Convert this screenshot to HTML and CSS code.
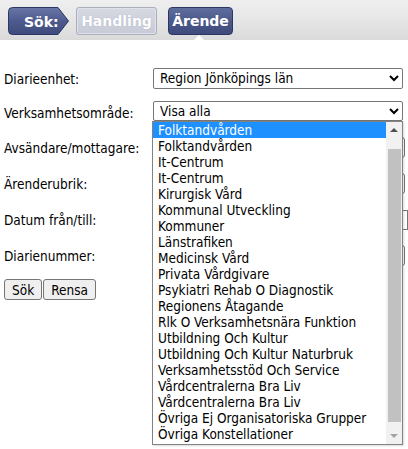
FILE: index.html
```html
<!DOCTYPE html>
<html lang="sv">
<head>
<meta charset="utf-8">
<link rel="stylesheet" href="styles.css">
</head>
<body>
<div class="topbar">
  <div class="tab tab-sok">
    <svg class="tab-shape" width="62" height="28" viewBox="0 0 62 28">
      <defs>
        <linearGradient id="g1" x1="0" y1="0" x2="0" y2="1">
          <stop offset="0" stop-color="#6a76a6"/>
          <stop offset="0.5" stop-color="#4d5a8e"/>
          <stop offset="1" stop-color="#3f4b7c"/>
        </linearGradient>
      </defs>
      <path d="M4.5 0.5 H50 L60.5 14 L50 27.5 H4.5 Q0.5 27.5 0.5 23.5 V4.5 Q0.5 0.5 4.5 0.5 Z" fill="url(#g1)" stroke="#2c3766" stroke-width="1"/>
    </svg>
    <span class="tab-label">Sök:</span>
  </div>
  <div class="tab tab-handling">Handling</div>
  <div class="tab tab-arende">Ärende</div>
  <span class="notch"></span>
</div>

<form class="form">
  <div class="row r1">
    <label class="lbl">Diarieenhet:</label>
    <select class="sel"><option>Region Jönköpings län</option></select>
  </div>
  <div class="row r2">
    <label class="lbl">Verksamhetsområde:</label>
    <select class="sel"><option>Visa alla</option></select>
  </div>
  <div class="row r3">
    <label class="lbl">Avsändare/mottagare:</label>
    <input class="txt" type="text">
  </div>
  <div class="row r4">
    <label class="lbl">Ärenderubrik:</label>
    <input class="txt" type="text">
  </div>
  <div class="row r5">
    <label class="lbl">Datum från/till:</label>
    <input class="txt wide" type="text">
  </div>
  <div class="row r6">
    <label class="lbl">Diarienummer:</label>
    <input class="txt" type="text">
  </div>
  <div class="buttons">
    <button type="button" class="btn">Sök</button><button type="button" class="btn">Rensa</button>
  </div>

  <div class="listbox">
    <ul class="options">
      <li class="opt active">Folktandvården</li>
      <li class="opt">Folktandvården</li>
      <li class="opt">It-Centrum</li>
      <li class="opt">It-Centrum</li>
      <li class="opt">Kirurgisk Vård</li>
      <li class="opt">Kommunal Utveckling</li>
      <li class="opt">Kommuner</li>
      <li class="opt">Länstrafiken</li>
      <li class="opt">Medicinsk Vård</li>
      <li class="opt">Privata Vårdgivare</li>
      <li class="opt">Psykiatri Rehab O Diagnostik</li>
      <li class="opt">Regionens Åtagande</li>
      <li class="opt">Rlk O Verksamhetsnära Funktion</li>
      <li class="opt">Utbildning Och Kultur</li>
      <li class="opt">Utbildning Och Kultur Naturbruk</li>
      <li class="opt">Verksamhetsstöd Och Service</li>
      <li class="opt">Vårdcentralerna Bra Liv</li>
      <li class="opt">Vårdcentralerna Bra Liv</li>
      <li class="opt">Övriga Ej Organisatoriska Grupper</li>
      <li class="opt">Övriga Konstellationer</li>
    </ul>
    <div class="scrollbar">
      <span class="arrow up"></span>
      <span class="thumb"></span>
      <span class="arrow down"></span>
    </div>
  </div>
</form>
</body>
</html>
```

FILE: styles.css
```css
* { box-sizing: border-box; }
html, body {
  margin: 0;
  padding: 0;
  background: #fff;
  overflow: hidden;
}
body {
  font-family: "DejaVu Sans Condensed", "DejaVu Sans", Verdana, sans-serif;
  font-size: 13.5px;
  color: #000;
  width: 408px;
  height: 449px;
}

.topbar {
  position: relative;
  height: 40px;
  background: linear-gradient(#efefef, #e4e4e4 60%, #dadada);
  display: flex;
  align-items: flex-start;
  padding: 7px 0 0 8px;
}
.tab {
  height: 28px;
  font-family: "DejaVu Sans", Verdana, sans-serif;
  font-weight: bold;
  font-size: 14px;
  color: #fff;
  display: flex;
  align-items: center;
  justify-content: center;
}
.tab-sok {
  position: relative;
  width: 62px;
  justify-content: flex-start;
}
.tab-shape {
  position: absolute;
  left: 0;
  top: 0;
}
.tab-label {
  position: relative;
  padding-left: 16px;
  padding-top: 1px;
}
.tab-handling {
  margin-left: 6px;
  width: 81px;
  background: linear-gradient(#d6d9e2, #c7cbd6);
  border: 1px solid #a9aebd;
  border-radius: 3px;
  box-shadow: inset 0 0 0 1px #dfe2ea;
  text-shadow: 0 0 1px #9aa1b8;
}
.tab-arende {
  margin-left: 11px;
  width: 65px;
  background: linear-gradient(#5f6c9e, #4a5789 55%, #3e4a7a);
  border: 1px solid #2c3766;
  border-radius: 4px;
}
.notch {
  position: absolute;
  left: 194px;
  bottom: 0;
  width: 0;
  height: 0;
  border-left: 5px solid transparent;
  border-right: 5px solid transparent;
  border-bottom: 5px solid #fff;
}

.form {
  position: relative;
  padding: 21px 0 0 4px;
}
.row {
  display: flex;
  align-items: center;
}
.r1 { height: 34px; }
.r2 { height: 34px; }
.r3 { height: 36px; }
.r4 { height: 37px; }
.r5 { height: 35px; }
.r6 { height: 37px; }
.lbl {
  width: 149px;
  flex: none;
  padding-top: 1px;
  white-space: nowrap;
}
.sel {
  width: 250px;
  height: 21px;
  font: inherit;
  border: 1px solid #767676;
  border-radius: 2px;
  background: #fff;
  color: #000;
  padding: 0 2px;
}
.r2 .sel { height: 20px; margin-top: -2px; }
.txt {
  width: 252px;
  height: 21px;
  border: 1px solid #767676;
  border-radius: 3px;
  font: inherit;
}
.txt.wide { width: 290px; height: 20px; border-radius: 0; }

.buttons {
  display: flex;
  margin-top: 5px;
}
.btn {
  font: inherit;
  height: 21px;
  padding: 0 7px;
  background: #efefef;
  border: 1px solid #767676;
  border-radius: 3px;
  color: #000;
}
.btn + .btn { margin-left: 1px; }

.listbox {
  position: absolute;
  left: 152px;
  top: 81px;
  width: 251px;
  height: 324px;
  border: 1px solid #828282;
  background: #fff;
  display: flex;
  box-shadow: 1px 1px 2px rgba(0,0,0,0.15);
}
.options {
  list-style: none;
  margin: 0;
  padding: 0;
  flex: 1;
  overflow: hidden;
}
.opt {
  height: 16px;
  line-height: 16px;
  padding-left: 5px;
  white-space: nowrap;
}
.opt.active {
  background: #1e90ff;
  color: #fff;
}
.scrollbar {
  width: 16px;
  background: #f1f1f1;
  display: flex;
  flex-direction: column;
  align-items: center;
}
.arrow {
  width: 0;
  height: 0;
  border-left: 4px solid transparent;
  border-right: 4px solid transparent;
}
.arrow.up {
  margin-top: 6px;
  border-bottom: 4px solid #505050;
}
.arrow.down {
  margin-top: auto;
  margin-bottom: 6px;
  border-top: 4px solid #a3a3a3;
}
.thumb {
  margin-top: 17px;
  width: 13px;
  height: 273px;
  background: #c1c1c1;
}
```
